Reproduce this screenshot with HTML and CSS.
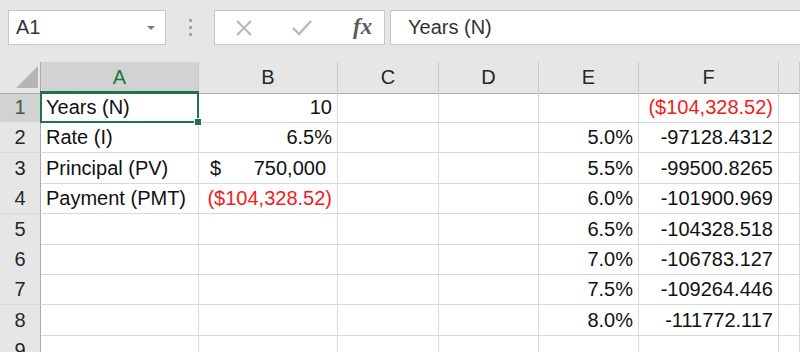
FILE: index.html
```html
<html>
<head>
    <title>Excel - PMT table</title>
    <link rel="stylesheet" href="styles.css">
</head>
<body>

<div class="toolbar">
    <div class="name-box">
        <span>A1</span>
        <span class="drop"></span>
    </div>
    <div class="dots"><i></i><i></i><i></i></div>
    <div class="fx-box">
        <svg class="icon" width="20" height="16" viewBox="0 0 20 16">
            <path d="M3 1 L17 15 M17 1 L3 15" stroke="#b8b8b8" stroke-width="2" fill="none"/>
        </svg>
        <svg class="icon" width="22" height="16" viewBox="0 0 22 16">
            <path d="M2 8 L8 14 L20 1" stroke="#b8b8b8" stroke-width="2.4" fill="none"/>
        </svg>
        <span class="fx">fx</span>
    </div>
    <div class="formula">Years (N)</div>
</div>

<div class="sheet">
    <div class="row head">
        <div class="cell corner"><span class="tri"></span></div>
        <div class="cell col sel">A</div>
        <div class="cell col">B</div>
        <div class="cell col">C</div>
        <div class="cell col">D</div>
        <div class="cell col">E</div>
        <div class="cell col">F</div>
        <div class="cell col"></div>
    </div>

    <div class="row">
        <div class="cell num sel">1</div>
        <div class="cell active">Years (N)<span class="handle"></span></div>
        <div class="cell r">10</div>
        <div class="cell"></div>
        <div class="cell"></div>
        <div class="cell"></div>
        <div class="cell r red">($104,328.52)</div>
        <div class="cell"></div>
    </div>

    <div class="row">
        <div class="cell num">2</div>
        <div class="cell">Rate (I)</div>
        <div class="cell r">6.5%</div>
        <div class="cell"></div>
        <div class="cell"></div>
        <div class="cell r">5.0%</div>
        <div class="cell r">-97128.4312</div>
        <div class="cell"></div>
    </div>

    <div class="row">
        <div class="cell num">3</div>
        <div class="cell">Principal (PV)</div>
        <div class="cell acct"><span>$</span><span>750,000</span></div>
        <div class="cell"></div>
        <div class="cell"></div>
        <div class="cell r">5.5%</div>
        <div class="cell r">-99500.8265</div>
        <div class="cell"></div>
    </div>

    <div class="row">
        <div class="cell num">4</div>
        <div class="cell">Payment (PMT)</div>
        <div class="cell r red">($104,328.52)</div>
        <div class="cell"></div>
        <div class="cell"></div>
        <div class="cell r">6.0%</div>
        <div class="cell r">-101900.969</div>
        <div class="cell"></div>
    </div>

    <div class="row">
        <div class="cell num">5</div>
        <div class="cell"></div>
        <div class="cell"></div>
        <div class="cell"></div>
        <div class="cell"></div>
        <div class="cell r">6.5%</div>
        <div class="cell r">-104328.518</div>
        <div class="cell"></div>
    </div>

    <div class="row">
        <div class="cell num">6</div>
        <div class="cell"></div>
        <div class="cell"></div>
        <div class="cell"></div>
        <div class="cell"></div>
        <div class="cell r">7.0%</div>
        <div class="cell r">-106783.127</div>
        <div class="cell"></div>
    </div>

    <div class="row">
        <div class="cell num">7</div>
        <div class="cell"></div>
        <div class="cell"></div>
        <div class="cell"></div>
        <div class="cell"></div>
        <div class="cell r">7.5%</div>
        <div class="cell r">-109264.446</div>
        <div class="cell"></div>
    </div>

    <div class="row">
        <div class="cell num">8</div>
        <div class="cell"></div>
        <div class="cell"></div>
        <div class="cell"></div>
        <div class="cell"></div>
        <div class="cell r">8.0%</div>
        <div class="cell r">-111772.117</div>
        <div class="cell"></div>
    </div>

    <div class="row">
        <div class="cell num">9</div>
        <div class="cell"></div>
        <div class="cell"></div>
        <div class="cell"></div>
        <div class="cell"></div>
        <div class="cell"></div>
        <div class="cell"></div>
        <div class="cell"></div>
    </div>
</div>

</body>
</html>
```

FILE: styles.css
```css
body
{
    margin: 0;
    font-family: 'Liberation Sans', Arial, sans-serif;
    background-color: #ffffff;
    color: #111;
    overflow: hidden;
}

/* top bar with name box and formula field */
.toolbar
{
    display: flex;
    align-items: flex-start;
    height: 62px;
    padding: 10px 0 0 8px;
    box-sizing: border-box;
    background-color: #e6e6e6;
}

.name-box
{
    display: flex;
    align-items: center;
    justify-content: space-between;
    width: 158px;
    height: 35px;
    padding: 0 10px 0 7px;
    box-sizing: border-box;
    background-color: #fff;
    border: 1px solid #c6c6c6;
    font-size: 20px;
    color: #333;
}

.drop
{
    width: 0;
    height: 0;
    border-left: 4px solid transparent;
    border-right: 4px solid transparent;
    border-top: 4px solid #7a7a7a;
}

.dots
{
    display: flex;
    flex-direction: column;
    align-items: center;
    gap: 4px;
    width: 48px;
    padding-top: 9px;
}

.dots i
{
    width: 3px;
    height: 3px;
    background-color: #a6a6a6;
}

.fx-box
{
    display: flex;
    align-items: center;
    width: 171px;
    height: 35px;
    padding-left: 19px;
    gap: 37px;
    box-sizing: border-box;
    background-color: #fff;
    border: 1px solid #c6c6c6;
}

.fx
{
    font-family: 'Liberation Serif', serif;
    font-style: italic;
    font-weight: bold;
    font-size: 23px;
    color: #5c5c5c;
    margin-left: 3px;
    margin-top: -2px;
}

.formula
{
    flex: 1;
    height: 35px;
    margin-left: 5px;
    padding-left: 17px;
    box-sizing: border-box;
    background-color: #fff;
    border: 1px solid #c6c6c6;
    border-right: none;
    font-size: 20px;
    line-height: 33px;
    color: #333;
}

/* grid */
.row
{
    display: grid;
    grid-template-columns: 41px 158px 139px 101px 100px 100px 140px 1fr;
    height: 30.4px;
}

.row.head
{
    height: 30px;
}

.cell
{
    box-sizing: border-box;
    border-right: 1px solid #d9d9d9;
    border-bottom: 1px solid #d9d9d9;
    padding: 1px 5px 0 5px;
    font-size: 20px;
    line-height: 29px;
    white-space: nowrap;
    overflow: visible;
}

.r
{
    text-align: right;
    padding-right: 5px;
}

.red
{
    color: #f21c1c;
}

.acct
{
    display: flex;
    justify-content: space-between;
    padding-left: 11px;
    padding-right: 11px;
}

.head .cell
{
    background-color: #e6e6e6;
    border-right: 1px solid #c8c8c8;
    border-bottom: 1px solid #ababab;
    text-align: center;
    color: #262626;
}

.head .corner
{
    position: relative;
    border-right: 1px solid #ababab;
}

.tri
{
    position: absolute;
    left: 16px;
    top: 4px;
    width: 0;
    height: 0;
    border-left: 22px solid transparent;
    border-bottom: 22px solid #b5b5b5;
}

.head .sel
{
    background-color: #d2d2d2;
    color: #217346;
    border-bottom: 2px solid #217346;
}

.num
{
    background-color: #e6e6e6;
    border-right: 1px solid #ababab;
    border-bottom: 1px solid #dcdcdc;
    text-align: center;
    padding: 1px 0 0 0;
    color: #262626;
}

.num.sel
{
    background-color: #d2d2d2;
    color: #3a5f47;
}

/* selected cell */
.active
{
    position: relative;
}

.active::after
{
    content: "";
    position: absolute;
    left: -1px;
    top: -1px;
    right: -1px;
    bottom: -1px;
    border: 2px solid #217346;
}

.handle
{
    position: absolute;
    right: -4px;
    bottom: -4px;
    width: 6px;
    height: 6px;
    background-color: #217346;
    border: 1px solid #fff;
    z-index: 2;
}
```
